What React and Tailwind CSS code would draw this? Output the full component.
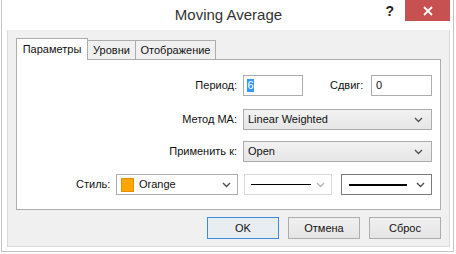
import React from 'react';

function Chevron({ light }) {
  return (
    <svg width="9" height="6" viewBox="0 0 9 6" className="shrink-0">
      <polyline
        points="1,1 4.5,4.5 8,1"
        fill="none"
        stroke={light ? '#b5b5b5' : '#505050'}
        strokeWidth="1.4"
      />
    </svg>
  );
}

function Label({ children, className = '' }) {
  return <div className={`text-[11px] text-[#111] leading-none ${className}`}>{children}</div>;
}

function Button({ children, primary }) {
  return (
    <button
      className={`w-[72px] h-[22px] text-[11px] text-[#111] leading-none border ${
        primary ? 'border-[#3c8ad8] bg-[#e8edf2]' : 'border-[#adadad] bg-gradient-to-b from-[#f0f0f0] to-[#e5e5e5]'
      }`}
    >
      {children}
    </button>
  );
}

export default function App() {
  return (
    <div className="w-[456px] h-[254px] bg-white overflow-hidden" style={{ fontFamily: '"Liberation Sans", Arial, sans-serif' }}>
      <div className="ml-[1px] w-[453px] h-[252px] border-l border-r border-b border-[#c4c4c4] bg-white pl-[5px] pr-[3px] pb-[4px] flex flex-col">
        {/* title bar */}
        <div className="h-[30px] relative flex items-start justify-end">
          <div className="absolute inset-x-0 top-[7px] text-center text-[15px] text-[#333] leading-none">Moving Average</div>
          <div className="mt-[4px] mr-[11px] text-[14px] font-bold text-[#222] leading-none">?</div>
          <div className="w-[45px] h-[21px] bg-[#c75050] flex items-center justify-center">
            <svg width="10" height="10" viewBox="0 0 10 10">
              <path d="M1 1 L9 9 M9 1 L1 9" stroke="white" strokeWidth="1.8" />
            </svg>
          </div>
        </div>

        {/* client area */}
        <div className="flex-1 bg-[#f0f0f0] border-l border-r border-b border-[#dadada] pl-[8px] pr-[8px] pt-[8px] flex flex-col">
          {/* tabs */}
          <div className="flex items-end h-[21px] relative z-10">
            <div className="w-[72px] h-[22px] -mb-[1px] bg-white border border-b-0 border-[#adadad] flex items-center justify-center text-[11px] text-[#111]">
              Параметры
            </div>
            <div className="w-[48px] h-[19px] bg-[#f0f0f0] border border-l-0 border-b-0 border-[#adadad] flex items-center justify-center text-[11px] text-[#111]">
              Уровни
            </div>
            <div className="w-[80px] h-[19px] bg-[#f0f0f0] border border-l-0 border-b-0 border-[#adadad] flex items-center justify-center text-[11px] text-[#111]">
              Отображение
            </div>
          </div>

          {/* pane */}
          <div className="w-[425px] h-[151px] bg-white border border-[#adadad] flex flex-col">
            {/* Период / Сдвиг */}
            <div className="flex items-center mt-[15px] h-[21px]">
              <Label className="w-[220px] text-right">Период:</Label>
              <div className="ml-[6px] w-[60px] h-[21px] border border-[#abadb3] flex items-center pl-[3px]">
                <span className="bg-[#3399ff] text-white text-[11px] leading-none px-[0.5px] py-[1px]">6</span>
              </div>
              <Label className="ml-[27px] w-[37px]">Сдвиг:</Label>
              <div className="ml-[4px] w-[61px] h-[21px] border border-[#abadb3] flex items-center pl-[4px] text-[11px] leading-none text-[#111]">
                0
              </div>
            </div>

            {/* Метод MA */}
            <div className="flex items-center mt-[13px] h-[21px]">
              <Label className="w-[220px] text-right">Метод MA:</Label>
              <div className="ml-[6px] w-[189px] h-[21px] border border-[#acacac] bg-gradient-to-b from-[#f2f2f2] to-[#e6e6e6] flex items-center justify-between pl-[4px] pr-[8px]">
                <span className="text-[11px] leading-none text-[#111]">Linear Weighted</span>
                <Chevron />
              </div>
            </div>

            {/* Применить к */}
            <div className="flex items-center mt-[11px] h-[21px]">
              <Label className="w-[220px] text-right">Применить к:</Label>
              <div className="ml-[6px] w-[189px] h-[21px] border border-[#acacac] bg-gradient-to-b from-[#f2f2f2] to-[#e6e6e6] flex items-center justify-between pl-[4px] pr-[8px]">
                <span className="text-[11px] leading-none text-[#111]">Open</span>
                <Chevron />
              </div>
            </div>

            {/* Стиль */}
            <div className="flex items-center mt-[12px] h-[21px]">
              <Label className="ml-[59px] w-[40px]">Стиль:</Label>
              <div className="w-[122px] h-[21px] border border-[#acacac] bg-white flex items-center pl-[4px] pr-[6px]">
                <div className="w-[13px] h-[14px] bg-[#ffa500] border border-[#e09000]" />
                <span className="ml-[5px] text-[11px] leading-none text-[#111] flex-1">Orange</span>
                <Chevron />
              </div>
              <div className="ml-[6px] w-[88px] h-[21px] border border-[#d9d9d9] bg-white flex items-center pl-[6px] pr-[6px]">
                <div className="w-[60px] h-[1px] bg-black" />
                <div className="flex-1" />
                <Chevron light />
              </div>
              <div className="ml-[9px] w-[91px] h-[21px] border border-[#7a7a7a] bg-white flex items-center pl-[7px] pr-[6px]">
                <div className="w-[58px] h-[2px] bg-black" />
                <div className="flex-1" />
                <Chevron />
              </div>
            </div>
          </div>

          {/* buttons */}
          <div className="w-[425px] mt-[7px] flex justify-end gap-[9px]">
            <Button primary>OK</Button>
            <Button>Отмена</Button>
            <Button>Сброс</Button>
          </div>
        </div>
      </div>
    </div>
  );
}
